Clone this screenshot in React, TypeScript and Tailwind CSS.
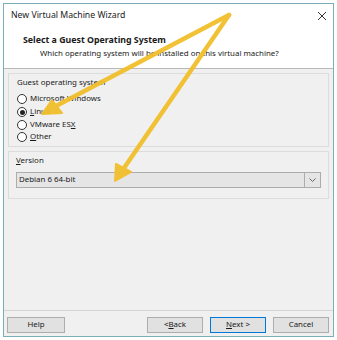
import React from 'react';

const font = { fontFamily: '"Noto Sans", "Open Sans", sans-serif' };

const Radio: React.FC<{ checked?: boolean; children: React.ReactNode }> = ({ checked, children }) => (
  <div className="flex items-center gap-[3px] h-[12.7px]">
    <span className="w-[10px] h-[10px] rounded-full border border-[#333] bg-white flex items-center justify-center">
      {checked && <span className="w-[5px] h-[5px] rounded-full bg-[#222]" />}
    </span>
    <span>{children}</span>
  </div>
);

const Btn: React.FC<{ primary?: boolean; className?: string; children: React.ReactNode }> = ({
  primary,
  className,
  children,
}) => (
  <div
    className={`h-[16px] w-[56px] flex items-center justify-center bg-[#e1e1e1] border ${
      primary ? 'border-[#0078d7]' : 'border-[#adadad]'
    } ${className ?? ''}`}
  >
    {children}
  </div>
);

export default function App() {
  return (
    <div className="relative w-[337px] h-[340px] bg-white text-[7.9px] text-[#1a1a1a]" style={font}>
      <div className="absolute left-[3px] top-[3px] w-[331px] h-[334px] border border-[#7aaebb] flex flex-col">
        {/* title bar */}
        <div className="h-[24px] flex items-center justify-between pl-[7px] pr-[6px] bg-white">
          <span className="text-[8.7px] text-[#222]">New Virtual Machine Wizard</span>
          <svg width="10" height="10" viewBox="0 0 10 10">
            <path d="M1 1 L9 9 M9 1 L1 9" stroke="#333" strokeWidth="1" />
          </svg>
        </div>
        {/* header */}
        <div className="h-[41px] bg-white border-b border-[#b9b9b9] pl-[19px] pt-[6px]">
          <div className="font-bold text-[8.8px] leading-[13px]">Select a Guest Operating System</div>
          <div className="pl-[17px] leading-[13px]">Which operating system will be installed on this virtual machine?</div>
        </div>
        {/* body */}
        <div className="flex-1 bg-[#f0f0f0] px-[4px] pt-[4px] flex flex-col gap-[4px]">
          <div className="border border-[#dcdcdc] px-[8px] pt-[2px] pb-[2px]">
            <div className="leading-[13px] mb-[4px]">Guest operating system</div>
            <Radio>Microsoft Windows</Radio>
            <Radio checked>
              <u>L</u>inux
            </Radio>
            <Radio>
              VMware ES<u>X</u>
            </Radio>
            <Radio>
              <u>O</u>ther
            </Radio>
          </div>
          <div className="border border-[#dcdcdc] px-[7px] pt-[2px] pb-[10px]">
            <div className="leading-[13px] mb-[5px]">
              <u>V</u>ersion
            </div>
            <div className="h-[16px] flex border border-[#acacac] bg-[#e5e5e5]">
              <div className="flex-1 flex items-center pl-[2px] border-r border-[#acacac]">Debian 6 64-bit</div>
              <div className="w-[15px] flex items-center justify-center">
                <svg width="7" height="4" viewBox="0 0 7 4">
                  <path d="M0.5 0.5 L3.5 3.5 L6.5 0.5" stroke="#555" fill="none" strokeWidth="0.9" />
                </svg>
              </div>
            </div>
          </div>
        </div>
        {/* footer */}
        <div className="h-[26px] bg-[#f0f0f0] border-t border-[#d5d5d5] flex items-start pt-[6px] pl-[3px] pr-[4px]">
          <Btn className="w-[58px]">Help</Btn>
          <div className="flex-1" />
          <Btn>
            &lt; <u>B</u>ack
          </Btn>
          <Btn primary className="ml-[7px]">
            <u>N</u>ext &gt;
          </Btn>
          <Btn className="ml-[7px]">Cancel</Btn>
        </div>
      </div>
      {/* annotation arrows */}
      <svg className="absolute inset-0 pointer-events-none" width="337" height="340" viewBox="0 0 337 340">
        <g fill="#f2bf2c" stroke="#f2bf2c" strokeLinecap="round" strokeLinejoin="round" opacity="0.95">
          <path d="M229 15 L56 106" strokeWidth="4.5" fill="none" />
          <path d="M42 114 L52 100 L62 113 Z" strokeWidth="2" />
          <path d="M229 15 L124 168" strokeWidth="4.5" fill="none" />
          <path d="M115 181 L116 164 L131 172 Z" strokeWidth="2" />
        </g>
      </svg>
    </div>
  );
}
